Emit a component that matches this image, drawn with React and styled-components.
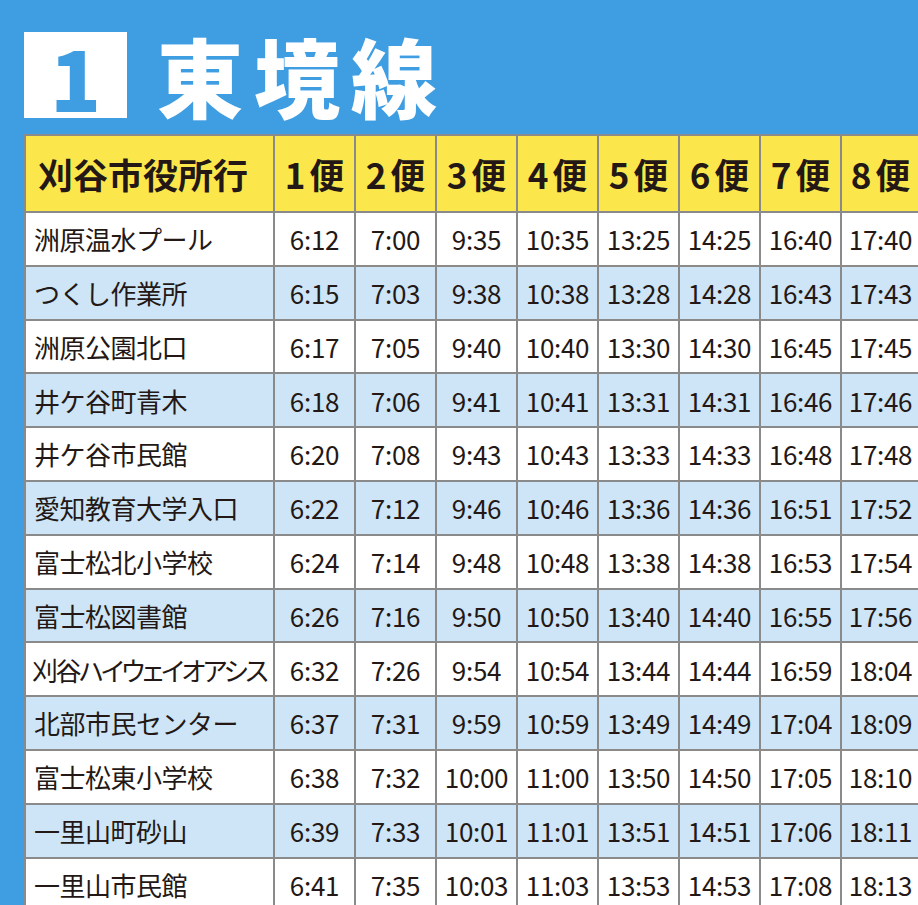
import React from "react";
import styled, { createGlobalStyle } from "styled-components";

const GlobalStyle = createGlobalStyle`
  html, body {
    margin: 0;
    padding: 0;
    background: #3f9de2;
    overflow: hidden;
  }
  body {
    font-family: "Noto Sans CJK JP", "Noto Sans", sans-serif;
  }
`;

const stops = [
  ["洲原温水プール", "6:12", "7:00", "9:35", "10:35", "13:25", "14:25", "16:40", "17:40"],
  ["つくし作業所", "6:15", "7:03", "9:38", "10:38", "13:28", "14:28", "16:43", "17:43"],
  ["洲原公園北口", "6:17", "7:05", "9:40", "10:40", "13:30", "14:30", "16:45", "17:45"],
  ["井ケ谷町青木", "6:18", "7:06", "9:41", "10:41", "13:31", "14:31", "16:46", "17:46"],
  ["井ケ谷市民館", "6:20", "7:08", "9:43", "10:43", "13:33", "14:33", "16:48", "17:48"],
  ["愛知教育大学入口", "6:22", "7:12", "9:46", "10:46", "13:36", "14:36", "16:51", "17:52"],
  ["富士松北小学校", "6:24", "7:14", "9:48", "10:48", "13:38", "14:38", "16:53", "17:54"],
  ["富士松図書館", "6:26", "7:16", "9:50", "10:50", "13:40", "14:40", "16:55", "17:56"],
  ["刈谷ハイウェイオアシス", "6:32", "7:26", "9:54", "10:54", "13:44", "14:44", "16:59", "18:04"],
  ["北部市民センター", "6:37", "7:31", "9:59", "10:59", "13:49", "14:49", "17:04", "18:09"],
  ["富士松東小学校", "6:38", "7:32", "10:00", "11:00", "13:50", "14:50", "17:05", "18:10"],
  ["一里山町砂山", "6:39", "7:33", "10:01", "11:01", "13:51", "14:51", "17:06", "18:11"],
  ["一里山市民館", "6:41", "7:35", "10:03", "11:03", "13:53", "14:53", "17:08", "18:13"],
];

const Page = styled.div`
  padding: 32px 0 0 24px;
`;

const TitleRow = styled.div`
  display: flex;
  align-items: center;
  height: 86px;
  gap: 30px;
`;

const NumberBox = styled.div`
  width: 103px;
  height: 86px;
  background: #fff;
  color: #3f9de2;
  display: flex;
  align-items: center;
  justify-content: center;
  font-weight: 900;
  font-size: 84px;
  line-height: 1;
  padding-top: 2px;
  box-sizing: border-box;
`;

const Title = styled.h1`
  margin: 0;
  color: #fff;
  font-weight: 900;
  font-size: 86px;
  line-height: 1;
  letter-spacing: 11px;
`;

const Table = styled.table`
  margin-top: 16px;
  border-collapse: collapse;
  table-layout: fixed;
  width: 894px;
  color: #231815;
`;

const HeadRow = styled.tr`
  height: 77px;
`;

const HeadCell = styled.th`
  background: #fbe74b;
  border: 2px solid #8a8a8a;
  border-right: ${(p) => (p.$last ? "none" : "2px solid #8a8a8a")};
  font-weight: 700;
  font-size: 35px;
  line-height: 1.2;
  text-align: ${(p) => (p.$first ? "left" : "center")};
  padding: 0 0 0 ${(p) => (p.$first ? "12px" : "0")};
  white-space: nowrap;
  overflow: hidden;
`;

const Num = styled.span`
  margin-right: 4px;
`;

const Row = styled.tr`
  background: ${(p) => (p.$alt ? "#cde5f6" : "#fff")};
  height: 53.8px;
`;

const Cell = styled.td`
  border: 2px solid #8a8a8a;
  border-right: ${(p) => (p.$last ? "none" : "2px solid #8a8a8a")};
  font-size: 26px;
  font-weight: 400;
  line-height: 1.2;
  text-align: ${(p) => (p.$first ? "left" : "center")};
  padding: 0 0 0 ${(p) => (p.$narrow ? "6px" : p.$first ? "8px" : "0")};
  white-space: nowrap;
  overflow: hidden;
  letter-spacing: ${(p) => (p.$narrow ? "-2.5px" : p.$first ? "-0.5px" : "-0.3px")};
  font-feature-settings: ${(p) => (p.$narrow ? '"palt"' : "normal")};
`;

export default function App() {
  return (
    <>
      <GlobalStyle />
      <Page>
        <TitleRow>
          <NumberBox>1</NumberBox>
          <Title>東境線</Title>
        </TitleRow>
        <Table>
          <colgroup>
            <col style={{ width: 249 }} />
            {Array.from({ length: 7 }).map((_, i) => (
              <col key={i} style={{ width: 81 }} />
            ))}
            <col style={{ width: 78 }} />
          </colgroup>
          <thead>
            <HeadRow>
              <HeadCell $first>刈谷市役所行</HeadCell>
              {Array.from({ length: 8 }).map((_, i) => (
                <HeadCell key={i} $last={i === 7}>
                  <Num>{i + 1}</Num>便
                </HeadCell>
              ))}
            </HeadRow>
          </thead>
          <tbody>
            {stops.map((r, i) => (
              <Row key={r[0]} $alt={i % 2 === 1}>
                {r.map((c, j) => (
                  <Cell
                    key={j}
                    $first={j === 0}
                    $last={j === 8}
                    $narrow={j === 0 && c.length > 9}
                  >
                    {c}
                  </Cell>
                ))}
              </Row>
            ))}
          </tbody>
        </Table>
      </Page>
    </>
  );
}
